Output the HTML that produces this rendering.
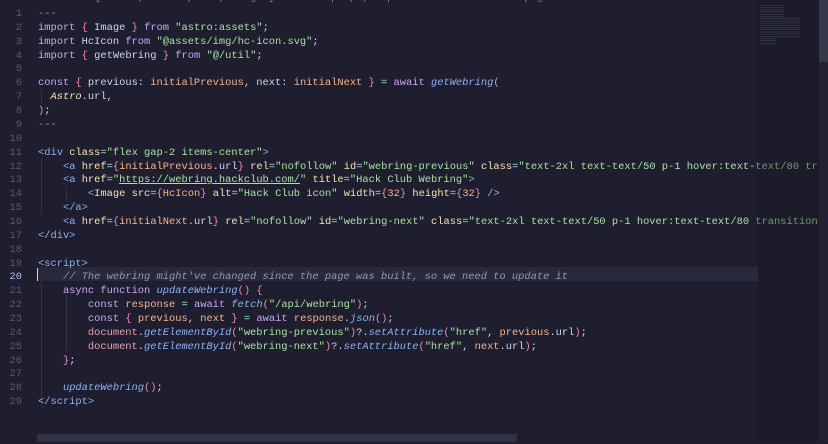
<!DOCTYPE html>
<html><head><meta charset="utf-8"><style>
html,body{margin:0;padding:0;width:828px;height:442px;overflow:hidden;background:#1e1e2e;}
.ed{position:absolute;left:0;top:0;width:828px;height:442px;font-family:"Liberation Mono",monospace;font-size:10.4px;color:#cdd6f4;}
.ln{position:absolute;left:0;width:22px;text-align:right;color:#585b70;height:13.86px;line-height:13.86px;}
.cl{position:absolute;left:38px;white-space:pre;height:13.86px;line-height:13.86px;}
.k{color:#cba6f7}.s{color:#a6e3a1}.p{color:#f38ba8}.v{color:#fab387}.f{color:#89b4fa;font-style:italic}
.o{color:#94e2d5}.c{color:#9399b2;font-style:italic}.a{color:#f9e2af}.tg{color:#89b4fa}.d{color:#9399b2}
.m{color:#eba0ac}.y{color:#f9e2af;font-style:italic}.dim{color:#7f849c}
.u{text-decoration:underline;text-decoration-color:#a6e3a1}
.g{position:absolute;width:1px;background:#313244;}
.w{position:absolute;left:0;top:2px;width:828px;height:442px;}
</style></head><body><div class="ed">
<div style="position:absolute;left:758px;top:0;width:61px;height:442px;background:#1b1b29"></div>
<div style="position:absolute;left:819px;top:0;width:9px;height:442px;background:#222232"></div>
<div style="position:absolute;left:819px;top:0;width:9px;height:62px;background:#363748"></div>
<div style="position:absolute;left:760px;top:5px;width:40px;height:40px;opacity:.25;background:repeating-linear-gradient(#6c7086 0 1px,transparent 1px 2.2px);clip-path:polygon(0 0,60% 0,60% 30%,100% 30%,100% 80%,40% 80%,40% 100%,0 100%)"></div>
<div style="position:absolute;left:37px;top:434px;width:480px;height:8px;background:#313244"></div>
<div class="w">
<div style="position:absolute;left:38px;top:265px;width:720px;height:14px;background:#28293a"></div>
<div style="position:absolute;left:37px;top:266px;width:1px;height:13px;background:#cdd6f4"></div>
<div class="g" style="left:41px;top:88px;height:14px"></div>
<div class="g" style="left:41px;top:157px;height:55px"></div>
<div class="g" style="left:66px;top:185px;height:14px"></div>
<div class="g" style="left:41px;top:280px;height:125px"></div>
<div class="g" style="left:66px;top:293px;height:56px"></div>
<div class="cl dim" style="top:-10px;left:38px;">   const { title, description, image } = Astro.props; export default function page</div>
<div class="ln" style="top:6px">1</div><div class="cl d" style="top:6px">---</div>
<div class="ln" style="top:19.9px">2</div><div class="cl" style="top:19.9px"><span class="k">import</span> <span class="p">{</span> Image <span class="p">}</span> <span class="k">from</span> <span class="s">"astro:assets"</span>;</div>
<div class="ln" style="top:33.7px">3</div><div class="cl" style="top:33.7px"><span class="k">import</span> HcIcon <span class="k">from</span> <span class="s">"@assets/img/hc-icon.svg"</span>;</div>
<div class="ln" style="top:47.6px">4</div><div class="cl" style="top:47.6px"><span class="k">import</span> <span class="p">{</span> getWebring <span class="p">}</span> <span class="k">from</span> <span class="s">"@/util"</span>;</div>
<div class="ln" style="top:61.4px">5</div>
<div class="ln" style="top:75.3px">6</div><div class="cl" style="top:75.3px"><span class="k">const</span> <span class="p">{</span> previous: <span class="v">initialPrevious</span>, next: <span class="v">initialNext</span> <span class="p">}</span> <span class="o">=</span> <span class="k">await</span> <span class="f">getWebring</span><span class="p">(</span></div>
<div class="ln" style="top:89.2px">7</div><div class="cl" style="top:89.2px">  <span class="y">Astro</span>.url,</div>
<div class="ln" style="top:103px">8</div><div class="cl" style="top:103px"><span class="p">)</span>;</div>
<div class="ln" style="top:116.9px">9</div><div class="cl d" style="top:116.9px">---</div>
<div class="ln" style="top:130.7px">10</div>
<div class="ln" style="top:144.6px">11</div><div class="cl" style="top:144.6px"><span class="tg">&lt;div</span> <span class="a">class</span><span class="o">=</span><span class="s">"flex gap-2 items-center"</span><span class="tg">&gt;</span></div>
<div class="ln" style="top:158.5px">12</div><div class="cl" style="top:158.5px">    <span class="tg">&lt;a</span> <span class="a">href</span><span class="o">=</span><span class="p">{</span><span class="v">initialPrevious</span>.url<span class="p">}</span> <span class="a">rel</span><span class="o">=</span><span class="s">"nofollow"</span> <span class="a">id</span><span class="o">=</span><span class="s">"webring-previous"</span> <span class="a">class</span><span class="o">=</span><span class="s">"text-2xl text-text/50 p-1 hover:text-<span style="opacity:.6">text/80 tr</span></span></div>
<div class="ln" style="top:172.3px">13</div><div class="cl" style="top:172.3px">    <span class="tg">&lt;a</span> <span class="a">href</span><span class="o">=</span><span class="s">"<span class="u">https://webring.hackclub.com/</span>"</span> <span class="a">title</span><span class="o">=</span><span class="s">"Hack Club Webring"</span><span class="tg">&gt;</span></div>
<div class="ln" style="top:186.2px">14</div><div class="cl" style="top:186.2px">        <span class="tg">&lt;</span><span class="a">Image</span> <span class="a">src</span><span class="o">=</span><span class="p">{</span><span class="v">HcIcon</span><span class="p">}</span> <span class="a">alt</span><span class="o">=</span><span class="s">"Hack Club icon"</span> <span class="a">width</span><span class="o">=</span><span class="p">{</span><span class="v">32</span><span class="p">}</span> <span class="a">height</span><span class="o">=</span><span class="p">{</span><span class="v">32</span><span class="p">}</span> <span class="tg">/&gt;</span></div>
<div class="ln" style="top:200px">15</div><div class="cl" style="top:200px">    <span class="tg">&lt;/a&gt;</span></div>
<div class="ln" style="top:213.9px">16</div><div class="cl" style="top:213.9px">    <span class="tg">&lt;a</span> <span class="a">href</span><span class="o">=</span><span class="p">{</span><span class="v">initialNext</span>.url<span class="p">}</span> <span class="a">rel</span><span class="o">=</span><span class="s">"nofollow"</span> <span class="a">id</span><span class="o">=</span><span class="s">"webring-next"</span> <span class="a">class</span><span class="o">=</span><span class="s">"text-2xl text-text/50 p-1 hover:text-text/80 <span style="opacity:.6">transition</span></span></div>
<div class="ln" style="top:227.8px">17</div><div class="cl" style="top:227.8px"><span class="tg">&lt;/div&gt;</span></div>
<div class="ln" style="top:241.6px">18</div>
<div class="ln" style="top:255.5px">19</div><div class="cl" style="top:255.5px"><span class="tg">&lt;script&gt;</span></div>
<div class="ln" style="top:269.3px;color:#b4befe">20</div><div class="cl" style="top:269.3px">    <span class="c">// The webring might've changed since the page was built, so we need to update it</span></div>
<div class="ln" style="top:283.2px">21</div><div class="cl" style="top:283.2px">    <span class="k">async</span> <span class="k">function</span> <span class="f">updateWebring</span><span class="p">()</span> <span class="p">{</span></div>
<div class="ln" style="top:297px">22</div><div class="cl" style="top:297px">        <span class="k">const</span> <span class="v">response</span> <span class="o">=</span> <span class="k">await</span> <span class="f">fetch</span><span class="p">(</span><span class="s">"/api/webring"</span><span class="p">)</span>;</div>
<div class="ln" style="top:310.9px">23</div><div class="cl" style="top:310.9px">        <span class="k">const</span> <span class="p">{</span> <span class="v">previous</span>, <span class="v">next</span> <span class="p">}</span> <span class="o">=</span> <span class="k">await</span> <span class="v">response</span>.<span class="f">json</span><span class="p">()</span>;</div>
<div class="ln" style="top:324.8px">24</div><div class="cl" style="top:324.8px">        <span class="m">document</span>.<span class="f">getElementById</span><span class="p">(</span><span class="s">"webring-previous"</span><span class="p">)</span>?.<span class="f">setAttribute</span><span class="p">(</span><span class="s">"href"</span>, <span class="v">previous</span>.url<span class="p">)</span>;</div>
<div class="ln" style="top:338.6px">25</div><div class="cl" style="top:338.6px">        <span class="m">document</span>.<span class="f">getElementById</span><span class="p">(</span><span class="s">"webring-next"</span><span class="p">)</span>?.<span class="f">setAttribute</span><span class="p">(</span><span class="s">"href"</span>, <span class="v">next</span>.url<span class="p">)</span>;</div>
<div class="ln" style="top:352.5px">26</div><div class="cl" style="top:352.5px">    <span class="p">}</span>;</div>
<div class="ln" style="top:366.3px">27</div>
<div class="ln" style="top:380.2px">28</div><div class="cl" style="top:380.2px">    <span class="f">updateWebring</span><span class="p">()</span>;</div>
<div class="ln" style="top:394px">29</div><div class="cl" style="top:394px"><span class="tg">&lt;/script&gt;</span></div>
</div>
</div></body></html>
